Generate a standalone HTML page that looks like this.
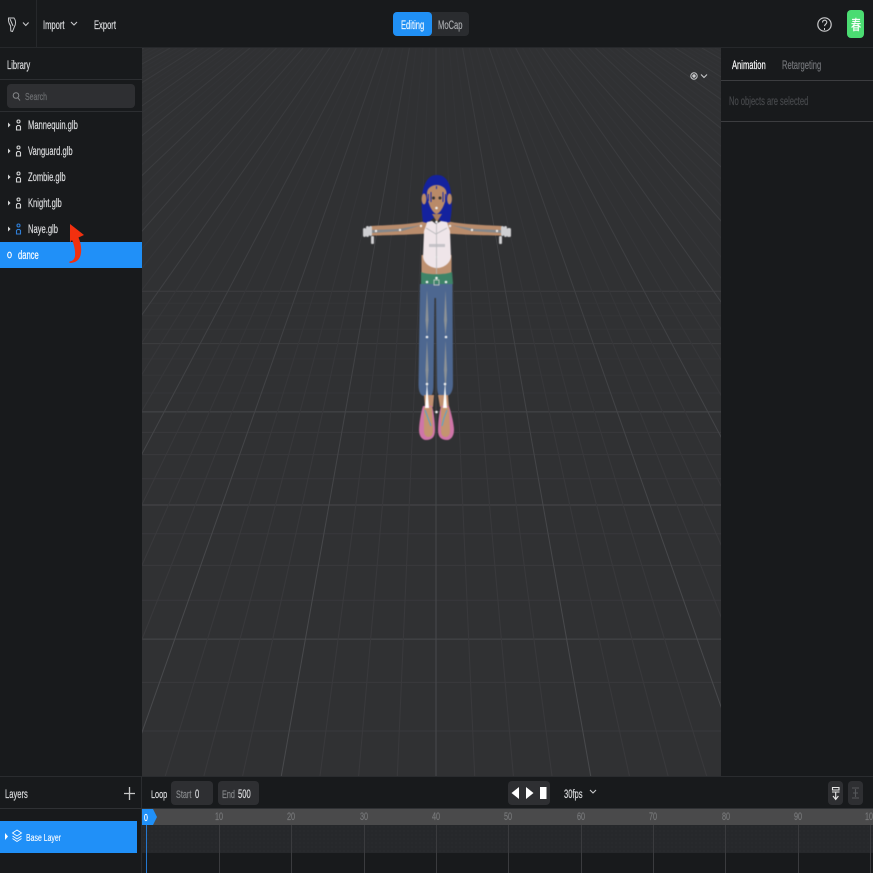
<!DOCTYPE html>
<html><head><meta charset="utf-8"><style>
html,body{margin:0;padding:0;background:#181a1c;width:873px;height:873px;overflow:hidden}
#r{position:relative;width:873px;height:873px;overflow:hidden;font-family:"Liberation Sans","Noto Sans CJK SC",sans-serif;color:#e6e7e8}
.a{position:absolute}
.t{position:absolute;white-space:nowrap;font-size:11.5px;line-height:14px;margin-top:2px;transform:scaleX(.66);transform-origin:0 50%;color:#dcdddf;-webkit-text-stroke:.2px currentColor}
svg{position:absolute;left:0;top:0}
.box{position:absolute;background:#2e2f32;border-radius:4px}
</style></head><body><div id="r">
<div class="a" style="left:142px;top:47px;width:579px;height:729px;background:#303133"></div>
<svg width="873" height="873" viewBox="0 0 873 873">
<defs><clipPath id="c"><rect x="142" y="48" width="579" height="728"/></clipPath>
<linearGradient id="gm" gradientUnits="userSpaceOnUse" x1="0" y1="48" x2="0" y2="500"><stop offset="0" stop-color="#323336"/><stop offset="1" stop-color="#39393c"/></linearGradient>
<linearGradient id="gM" gradientUnits="userSpaceOnUse" x1="0" y1="48" x2="0" y2="600"><stop offset="0" stop-color="#38393c"/><stop offset="1" stop-color="#48494c"/></linearGradient>
</defs>
<g id="lines" clip-path="url(#c)" fill="none" stroke-width="1"></g>
</svg>
<script>
(function(){var h='',i,y,x1,x2,maj,col;
for(i=-64;i<=8;i++){y=-103+1/(0.001942+i*0.0000743);if(y<48||y>776)continue;maj=(((i%4)+4)%4)==0;
if(maj){col=y>400?'#47484b':(y>280?'#3d3e41':'#37383b');}else{if(y<200)continue;col=y>400?'#39393d':'#343538';}
h+='<line x1="142" x2="721" y1="'+y.toFixed(1)+'" y2="'+y.toFixed(1)+'" stroke="'+col+'"/>';}
for(i=-60;i<=60;i++){maj=i%4==0;x1=436+151*i*0.044;x2=436+879*i*0.044;
col=maj?'url(#gM)':'url(#gm)';
h+='<line x1="'+x1.toFixed(1)+'" y1="48" x2="'+x2.toFixed(1)+'" y2="776" stroke="'+col+'"/>';}
document.getElementById('lines').innerHTML=h;})();
</script>

<!-- panels -->
<div class="a" style="left:0;top:0;width:873px;height:47px;background:#181a1c;border-bottom:1px solid #26282b"></div>
<div class="a" style="left:36px;top:0;width:1px;height:47px;background:#26282b"></div>
<div class="a" style="left:0;top:48px;width:142px;height:728px;background:#181a1c"></div>
<div class="a" style="left:721px;top:48px;width:152px;height:728px;background:#181a1c"></div>
<div class="a" style="left:0;top:79px;width:142px;height:1px;background:#2c2e31"></div>
<div class="a" style="left:0;top:111px;width:142px;height:1px;background:#2c2e31"></div>
<div class="a" style="left:721px;top:80px;width:152px;height:1px;background:#3c3d40"></div>
<div class="a" style="left:721px;top:121px;width:152px;height:1px;background:#3c3d40"></div>
<div class="a" style="left:0;top:776px;width:873px;height:97px;background:#181a1c;border-top:1px solid #2a2c2f;box-sizing:border-box"></div>
<div class="a" style="left:141px;top:776px;width:1px;height:97px;background:#2a2c2f"></div>
<div class="a" style="left:0;top:808px;width:873px;height:1px;background:#2f3134"></div>

<!-- top bar -->
<svg width="873" height="873" fill="none" stroke="#c9cacc" stroke-width="1">
<path d="M8.500 18h5.500c2 2.500 2 6 .3 9l-1.800 4.500-1.700-.5-.2-5c-1.600-2.500-2.400-5.500-2.100-8zM10 19l3 7"/>
<path d="M23 22.500l2.800 3 2.800-3M71 22l3 3 3-3M590 790l3 3 3-3M701 74.500l3 3 3-3" stroke-width="1.100"/>
<circle cx="824.500" cy="24.500" r="6.700" stroke-width="1.200"/>
<path d="M822.500 22.500c.2-3 4.300-3 4.300-.2 0 1.800-2.200 1.700-2.200 3.800" stroke-width="1.100"/>
<circle cx="694" cy="76" r="3.200"/><circle cx="694" cy="76" r="1.200" fill="#c9cacc"/>
</svg>
<div class="a" style="left:824px;top:28px;width:1px;height:1.500px;background:#ccc"></div>
<span class="t" style="left:43px;top:17px">Import</span>
<span class="t" style="left:94px;top:17px">Export</span>
<div class="box" style="left:393px;top:12px;width:76px;height:24px;background:#2a2c2f"></div>
<div class="box" style="left:393px;top:12px;width:38.500px;height:24px;background:#2090f5"></div>
<span class="t" style="left:401px;top:17px;color:#eef6ff">Editing</span>
<span class="t" style="left:438px;top:17px;color:#a8aaad">MoCap</span>
<div class="box" style="left:847px;top:10px;width:17px;height:28px;background:#4bdc72;border-radius:4px"></div>
<span class="t" style="left:850.500px;top:16px;font-size:14px;color:#fff;transform:scaleX(.72)">春</span>

<!-- left panel -->
<span class="t" style="left:7px;top:57px">Library</span>
<div class="box" style="left:7px;top:84px;width:128px;height:24px"></div>
<svg width="873" height="873" fill="none" stroke="#85878a"><circle cx="16" cy="95.500" r="2.800"/><path d="M18 98l2 2.500"/></svg>
<span class="t" style="left:25px;top:88px;font-size:10.500px;color:#6c6e71">Search</span>
<div class="a" style="left:0;top:242px;width:142px;height:26px;background:#2090f8"></div>
<svg width="873" height="873" fill="none" stroke="#d4d5d6" stroke-width="1.100">
<path d="M8 122.500l2.500 2.500-2.500 2.500z" fill="#d4d5d6" stroke="none"/><circle cx="18.500" cy="121.500" r="1.500"/><path d="M16.500 130h4v-3.500l-1-1h-2l-1 1z"/>
<path d="M8 148.500l2.500 2.500-2.500 2.500z" fill="#d4d5d6" stroke="none"/><circle cx="18.500" cy="147.500" r="1.500"/><path d="M16.500 156h4v-3.500l-1-1h-2l-1 1z"/>
<path d="M8 174.500l2.500 2.500-2.500 2.500z" fill="#d4d5d6" stroke="none"/><circle cx="18.500" cy="173.500" r="1.500"/><path d="M16.500 182h4v-3.500l-1-1h-2l-1 1z"/>
<path d="M8 200.500l2.500 2.500-2.500 2.500z" fill="#d4d5d6" stroke="none"/><circle cx="18.500" cy="199.500" r="1.500"/><path d="M16.500 208h4v-3.500l-1-1h-2l-1 1z"/>
<path d="M8 226.500l2.500 2.500-2.500 2.500z" fill="#d4d5d6" stroke="none"/>
<circle cx="18.500" cy="225.500" r="1.500" stroke="#2f7fd8"/><path d="M16.500 234h4v-3.500l-1-1h-2l-1 1z" stroke="#2f7fd8"/>
<ellipse cx="9.500" cy="255" rx="1.800" ry="2.800" stroke="#fff"/>
</svg>
<span class="t" style="left:28px;top:117px">Mannequin.glb</span>
<span class="t" style="left:28px;top:143px">Vanguard.glb</span>
<span class="t" style="left:28px;top:169px">Zombie.glb</span>
<span class="t" style="left:28px;top:195px">Knight.glb</span>
<span class="t" style="left:28px;top:221px">Naye.glb</span>
<span class="t" style="left:18px;top:247px;color:#fff">dance</span>
<svg width="873" height="873"><path d="M70 224l14 11-5.500 2.500c2.500 6 3.500 12 2 18-1.500 5-5.500 7.500-11 7.500l0-1.500c3.500-.5 5-2.500 5.500-5.500.5-5-.8-11-3-16l-2 2.500z" fill="#f2300f"/></svg>

<!-- right panel -->
<span class="t" style="left:732px;top:57px;color:#fff">Animation</span>
<span class="t" style="left:782px;top:57px;color:#74767a">Retargeting</span>
<span class="t" style="left:729px;top:93px;color:#47494c">No objects are selected</span>

<!-- character -->
<svg width="873" height="873" style="filter:blur(.4px)">
<path d="M427 221c-14 3-34 4-56 5l-1 9.500c20 0 42-1 57-2z" fill="#b98c6c"/>
<path d="M446 221c14 3 34 4 56 5l1 9.500c-20 0-42-1-57-2z" fill="#b98c6c"/>
<path d="M372 230l26-1 24-4-20 6-30 2zM501 230l-26-1-24-4 20 6 30 2z" fill="#84878b"/>
<g fill="#cfcfd2"><rect x="363" y="228" width="3" height="9" rx="1.500"/><rect x="366" y="226" width="3" height="11" rx="1.500"/><rect x="369" y="226" width="3" height="10" rx="1.500"/><rect x="501" y="226" width="3" height="10" rx="1.500"/><rect x="504" y="226" width="3" height="11" rx="1.500"/><rect x="507" y="228" width="4" height="9" rx="1.500"/><rect x="371" y="236" width="3" height="8" rx="1"/><rect x="499" y="236" width="3" height="8" rx="1"/></g>
<path d="M423 222c-2-14-2-30 2-38 3-7 7-9 12-9s9 2 12 9c3 8 4 24 1 38l-6 1-9-6-8 6z" fill="#14229e"/>
<ellipse cx="424" cy="199" rx="2.400" ry="5.500" fill="#b98a68"/><ellipse cx="449.500" cy="199" rx="2.400" ry="5.500" fill="#b98a68"/>
<path d="M427 193c0-5 5-8 9.500-8s10 3 10 8c0 8-5 20-10 21-5-1-9.500-13-9.500-21z" fill="#b98a68"/>
<path d="M431 192v10M428.500 194v7M443 192v10M445.500 194v7M436.500 186v3" stroke="#1a2aa8" stroke-width="1"/>
<circle cx="433.500" cy="198" r="1.500" fill="#333"/><circle cx="440" cy="198" r="1.500" fill="#333"/>
<path d="M432 214l5 8 5-8z" fill="#a87c5e"/>
<rect x="421.500" y="255" width="30" height="20" fill="#bd9070"/>
<path d="M427 222l5-1 4 3 5-3 6 1c1 4 2 6 3 9l1 26c-1 7-8 11-14 11s-13-4-14-11l1-26c1-3 2-5 3-9z" fill="#efe5e9"/>
<rect x="429" y="244" width="16" height="3" fill="#c6c3c8"/>
<path d="M421 272c6 3 24 3 31 0l1 12-14 2-4 0-14-2z" fill="#3e8468"/>
<path d="M420 284h32.500l.5 100c0 8-3 12-7 12h-5c-3 0-4-4-4-12l-1-86h-1.500l-1 86c0 8-1 12-4 12h-5c-4 0-6-4-6-12z" fill="#4d6790"/>
<rect x="434" y="280" width="5" height="5" fill="none" stroke="#b7c2bc"/>
<path d="M427 290l-1.500 30 1.500 16 1.500-16zM445.500 290l-1.500 30 1.500 16 1.500-16zM427 340l-1.500 30 1.500 22 1.500-22zM445.500 340l-1.500 30 1.500 22 1.500-22z" fill="#8d9296"/>
<path d="M424 395h10l-1 12h-8z M438 395h10l1 12h-9z" fill="#c19070"/>
<path d="M423 406c-2 6-4 18-4 24 0 6 3 10 7 10 6 0 9-3 9-10 0-6-1-17-3-24z" fill="#cf75a8"/>
<path d="M449 406c2 6 5 18 5 24 0 6-3 10-7 10-6 0-9-3-9-10 0-6 1-17 3-24z" fill="#cf75a8"/>
<path d="M424 407h8l1 24c0 4-2 6-4.500 6s-4.500-2-4.500-6zM441 407h8l1 24c0 4-2 6-4.500 6s-4.500-2-4.500-6z" fill="#c49470"/>
<path d="M425 410l3 8 3 8M447 410l-3 8-2 8" stroke="#4aa6d6" fill="none"/>
<path d="M427 383l-2 25h4zM445 383l-2 25h4z" fill="#fff"/>
<g fill="#f0f0f0"><circle cx="436.500" cy="222" r="1.300"/><circle cx="436.500" cy="208" r="1.300"/><circle cx="436.500" cy="257" r="1.300"/><circle cx="436.500" cy="278" r="1.300"/><circle cx="427" cy="282" r="1.300"/><circle cx="446" cy="282" r="1.300"/><circle cx="427" cy="337" r="1.300"/><circle cx="446" cy="337" r="1.300"/><circle cx="427" cy="384" r="1.300"/><circle cx="445" cy="384" r="1.300"/><circle cx="436.500" cy="412" r="1.300"/><circle cx="376" cy="231" r="1.200"/><circle cx="400" cy="230" r="1.200"/><circle cx="421" cy="226" r="1.200"/><circle cx="497" cy="231" r="1.200"/><circle cx="472" cy="230" r="1.200"/><circle cx="450" cy="226" r="1.200"/></g>
<path d="M436.500 224v50M426 228l10 6 11-6" stroke="#b8b8bb" fill="none" stroke-width=".8"/>
</svg>

<!-- bottom -->
<span class="t" style="left:5px;top:786px">Layers</span>
<svg width="873" height="873" stroke="#c6c7c8" stroke-width="1.300"><path d="M129.500 787v13M124 793.500h11"/></svg>
<div class="a" style="left:0;top:821px;width:137px;height:32px;background:#2090f8"></div>
<svg width="873" height="873" fill="none" stroke="#fff"><path d="M5 833l3 3.500-3 3.500z" fill="#fff" stroke="none"/><path d="M17 830l4.500 3-4.500 3-4.500-3zM12.500 836l4.500 3 4.500-3M12.500 838.500l4.500 3 4.500-3" stroke-width=".9"/></svg>
<span class="t" style="left:26px;top:829px;color:#fff;font-size:10.500px;-webkit-text-stroke:.1px #fff">Base Layer</span>
<span class="t" style="left:151px;top:786px;font-size:11px">Loop</span>
<div class="box" style="left:171px;top:781px;width:42px;height:24px"></div>
<div class="box" style="left:218px;top:781px;width:41px;height:24px"></div>
<span class="t" style="left:176px;top:786px;font-size:11px;color:#85878a">Start</span>
<span class="t" style="left:195px;top:786px;font-size:11.500px">0</span>
<span class="t" style="left:222px;top:786px;font-size:11px;color:#85878a">End</span>
<span class="t" style="left:238px;top:786px;font-size:11.500px">500</span>
<div class="box" style="left:508px;top:781px;width:42px;height:24px"></div>
<svg width="873" height="873" fill="#fff"><path d="M519 787v12l-7.500-6zM526 787v12l7.500-6z"/><rect x="540" y="787" width="6.500" height="12"/></svg>
<span class="t" style="left:564px;top:786px">30fps</span>
<div class="box" style="left:828px;top:781px;width:15px;height:24px"></div>
<div class="box" style="left:848px;top:781px;width:15px;height:24px"></div>
<svg width="873" height="873" fill="none"><path d="M832.500 787.500h6.500v2.500h-6.500zM832 792h7.500M835.700 792v7M833 796l2.700 3.500 2.700-3.500" stroke="#e8e8e8" stroke-width="1.100"/><path d="M852 788h7M852 798h7M855.500 789v8M853 793h5" stroke="#55575a" stroke-width="1.100"/></svg>

<!-- timeline -->
<div class="a" style="left:142px;top:809px;width:731px;height:16px;background:#4a4a4b"></div>
<div class="a" style="left:142px;top:825px;width:731px;height:28px;background:#26282b;background-image:radial-gradient(#2d2f32 .6px,transparent .7px);background-size:4px 4px"></div>
<svg width="873" height="873"><g stroke="#3a3b3e"><path d="M219.500 825v48M291.500 825v48M364.500 825v48M436.500 825v48M508.500 825v48M581.500 825v48M653.500 825v48M725.500 825v48M798.500 825v48M870.500 825v48"/></g>
<path d="M142 809h11l4 8-4 8h-11z" fill="#2090f8"/><path d="M146.500 825v48" stroke="#2478d0"/></svg>
<span class="t" style="left:144px;top:809px;font-size:10.500px;color:#fff">0</span>
<span class="t" style="left:215px;top:808px;color:#77787a;font-size:11px">10</span>
<span class="t" style="left:287px;top:808px;color:#77787a;font-size:11px">20</span>
<span class="t" style="left:360px;top:808px;color:#77787a;font-size:11px">30</span>
<span class="t" style="left:432px;top:808px;color:#77787a;font-size:11px">40</span>
<span class="t" style="left:504px;top:808px;color:#77787a;font-size:11px">50</span>
<span class="t" style="left:577px;top:808px;color:#77787a;font-size:11px">60</span>
<span class="t" style="left:649px;top:808px;color:#77787a;font-size:11px">70</span>
<span class="t" style="left:722px;top:808px;color:#77787a;font-size:11px">80</span>
<span class="t" style="left:794px;top:808px;color:#77787a;font-size:11px">90</span>
<span class="t" style="left:865px;top:808px;color:#77787a;font-size:11px">100</span>
</div></body></html>
